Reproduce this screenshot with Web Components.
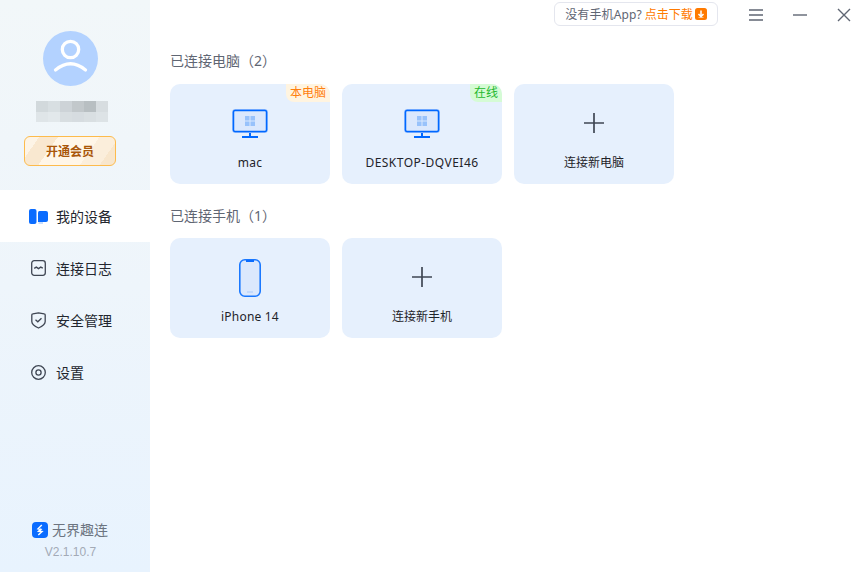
<!DOCTYPE html>
<html lang="zh">
<head>
<meta charset="utf-8">
<title>无界趣连</title>
<style>
  html, body { margin: 0; height: 100%; }
  body {
    width: 860px; height: 572px; overflow: hidden; background: #fff;
    font-family: "Noto Sans", "Noto Sans CJK SC", sans-serif;
  }
  app-shell { height: 572px; }
</style>
</head>
<body>
<app-shell>
  <side-bar slot="side">
    <nav-item active label="我的设备" icon="devices"></nav-item>
    <nav-item label="连接日志" icon="log"></nav-item>
    <nav-item label="安全管理" icon="shield"></nav-item>
    <nav-item label="设置" icon="gear"></nav-item>
  </side-bar>
  <top-bar slot="top"></top-bar>
  <device-section slot="main" heading="已连接电脑（2）" style="--title-gap:11px">
    <device-card kind="pc" name="mac" tag="本电脑" tone="orange"></device-card>
    <device-card kind="pc" name="DESKTOP-DQVEI46" tag="在线" tone="green" style="--track:.47px"></device-card>
    <device-card kind="add" name="连接新电脑" style="--track:0"></device-card>
  </device-section>
  <device-section slot="main" heading="已连接手机（1）">
    <device-card kind="phone" name="iPhone 14"></device-card>
    <device-card kind="add" name="连接新手机" style="--track:0"></device-card>
  </device-section>
</app-shell>

<script>
const ICONS = {
  devices: `<svg width="19" height="15" viewBox="0 0 19 15"><rect width="7.500" height="15" rx="2" fill="#0a6cff"/><path d="M9 3.500Q9 2 10.500 2H17Q19 2 19 4V11Q19 13 17 13H9Z" fill="#0a6cff"/><path d="M9.500 14H14" stroke="#8fbcff"/></svg>`,
  log: `<svg width="15" height="16" viewBox="0 0 15 16" fill="none" stroke="#3f4653" stroke-width="1.300"><rect x=".7" y=".7" width="13.600" height="14.600" rx="2.500"/><path d="M3.200 8.400 5.300 7.100 7.500 8.600 9.700 7.100 11.800 8.200"/></svg>`,
  shield: `<svg width="15" height="17" viewBox="0 0 15 17" fill="none" stroke="#3f4653" stroke-width="1.300"><path d="M.8 3Q.8 2 1.800 1.900L7.500 .8 13.200 1.900Q14.200 2 14.200 3V9.500Q14.200 13 7.500 16 .8 13 .8 9.500Z" stroke-linejoin="round"/><path d="M4.500 7.800 6.800 9.800 10.500 6.200"/></svg>`,
  gear: `<svg width="15" height="15" viewBox="0 0 15 15" fill="none" stroke="#3f4653" stroke-width="1.300"><circle cx="7.500" cy="7.500" r="6.800"/><circle cx="7.500" cy="7.500" r="2.600"/></svg>`,
  pc: `<svg width="36" height="30" viewBox="0 0 36 30"><rect x=".5" y=".5" width="35" height="23" rx="2.500" fill="#dbe8fd" stroke="#93bdff"/><rect x="1.500" y="1.500" width="33" height="21" rx="1.500" fill="none" stroke="#0068ff" stroke-width="1.500"/><g fill="#98c2fb"><rect x="13" y="7" width="4.500" height="4.500"/><rect x="18.500" y="7" width="4.500" height="4.500"/><rect x="13" y="12.500" width="4.500" height="4.500"/><rect x="18.500" y="12.500" width="4.500" height="4.500"/></g><rect x="17" y="24" width="2" height="3" fill="#0068ff"/><rect x="10" y="27" width="16" height="2" fill="#0068ff"/></svg>`,
  phone: `<svg width="24" height="38" viewBox="0 0 24 38"><rect x="1.800" y=".8" width="20.400" height="36.400" rx="5" fill="#dbe8fd" stroke="#1a78ff" stroke-width="1.600"/><rect x="8" y="1" width="8" height="2" fill="#0a6cff"/><rect x="9" y="32.500" width="6" height="1" fill="#a9c9fb"/></svg>`,
  add: `<svg width="22" height="22" viewBox="0 0 22 22"><path d="M11 0V20M1 10H21" stroke="#3f4653" stroke-width="1.700"/></svg>`
};

class AppShell extends HTMLElement {
  constructor() {
    super();
    this.attachShadow({ mode: 'open' }).innerHTML = `
      <style>
        :host { display: flex; }
        .right { flex: 1; display: flex; flex-direction: column; min-width: 0; }
        .main { padding: 0 20px; display: flex; flex-direction: column; gap: 20px; }
      </style>
      <slot name="side"></slot>
      <div class="right">
        <slot name="top"></slot>
        <div class="main"><slot name="main"></slot></div>
      </div>`;
  }
}

class SideBar extends HTMLElement {
  constructor() {
    super();
    const blur = ['#d2d9dc','#d8dfe2','#cdd3d7','#c2c8cb','#b8bfc2','#d7dde0',
                  '#dfe5e8','#e2e8eb','#d8dee1','#d6dce0','#d9dfe2','#dde3e6'];
    this.attachShadow({ mode: 'open' }).innerHTML = `
      <style>
        :host {
          display: flex; flex-direction: column; width: 150px; height: 572px; flex: none;
          background: linear-gradient(180deg, #f2f7f9 0%, #eef5fb 50%, #e8f3fe 100%);
        }
        .top { display: flex; flex-direction: column; align-items: center; padding: 31px 9px 24px 0; }
        .avatar { width: 55px; height: 55px; }
        .blur { display: grid; grid-template-columns: repeat(6, 12px); grid-auto-rows: 10.5px; margin: 15px 0 14px 3px; }
        .vip {
          width: 92px; height: 30px; box-sizing: border-box; border: 1.500px solid #fdbb4c; border-radius: 6px;
          margin-right: 1px;
          display: flex; align-items: center; justify-content: center;
          font-size: 12px; font-weight: 700; color: #a9570a;
          background: linear-gradient(125deg, #fdf4e6 0 13%, #f9e8d0 13% 30%, #fff6e8 30% 68%, #fbeedb 68% 86%, #f8e6cc 86%);
        }
        nav { display: flex; flex-direction: column; }
        .foot { margin-top: auto; display: flex; flex-direction: column; align-items: center; padding: 0 9px 12px 0; gap: 4px; }
        .brand { display: flex; align-items: center; gap: 4px; font-size: 14px; color: #6c7480; line-height: 20px; margin-right: 1px; }
        .ver { font-size: 12px; color: #a3aab6; line-height: 16px; font-family: "Liberation Sans", sans-serif; }
      </style>
      <div class="top">
        <svg class="avatar" viewBox="0 0 55 55">
          <circle cx="27.500" cy="27.500" r="27.500" fill="#b3d2ff"/>
          <circle cx="27.500" cy="18.500" r="8.200" fill="none" stroke="#fff" stroke-width="3.300"/>
          <path d="M12.500 39Q27.500 26.500 42.500 39" fill="none" stroke="#fff" stroke-width="3.300" stroke-linecap="round"/>
        </svg>
        <div class="blur">${blur.map(c => `<i style="background:${c}"></i>`).join('')}</div>
        <div class="vip">开通会员</div>
      </div>
      <nav><slot></slot></nav>
      <div class="foot">
        <div class="brand">
          <svg width="16" height="16" viewBox="0 0 16 16"><rect width="16" height="16" rx="4" fill="#0a6cff"/><path d="M9.800 3 6 6.800 9 7.500 7.200 9.200M9 6.800 6.500 9.300 10 9.500 6.300 13" fill="none" stroke="#fff" stroke-width="1.400"/></svg>
          <span>无界趣连</span>
        </div>
        <div class="ver">V2.1.10.7</div>
      </div>`;
  }
}

class NavItem extends HTMLElement {
  connectedCallback() {
    if (this.shadowRoot) return;
    this.attachShadow({ mode: 'open' }).innerHTML = `
      <style>
        :host { display: flex; align-items: center; height: 52px; font-size: 14px; color: #22262e; }
        :host([active]) { background: #fff; }
        .ic { display: flex; width: 15px; margin-left: 31px; margin-right: 10px; }
        :host([active]) .ic { width: 19px; margin-left: 29px; margin-right: 8px; }
      </style>
      <span class="ic">${ICONS[this.getAttribute('icon')]}</span>
      <span>${this.getAttribute('label')}</span>`;
  }
}

class TopBar extends HTMLElement {
  constructor() {
    super();
    this.attachShadow({ mode: 'open' }).innerHTML = `
      <style>
        :host { display: flex; align-items: flex-start; height: 49px; justify-content: flex-end; }
        .promo {
          margin-top: 2px; height: 24px; box-sizing: border-box; width: 164px;
          border: 1px solid #e4e6ee; border-radius: 6px;
          display: flex; align-items: center; justify-content: center;
          font-size: 12px; color: #5f6673; white-space: nowrap;
        }
        .promo span { letter-spacing: .1px; }
        .promo b { font-weight: 400; color: #ff7a00; margin-left: 3px; }
        .promo svg { margin-left: 2px; }
        .win { display: flex; margin-top: 7px; margin-right: 8px; margin-left: 30px; gap: 28px; }
        .win svg { display: block; }
      </style>
      <div class="promo"><span>没有手机App?</span><b>点击下载</b>
        <svg width="12" height="12" viewBox="0 0 12 12"><rect width="12" height="12" rx="2.500" fill="#ff7a00"/><path d="M6 2.500V7.500M3.500 6 6 8.700 8.500 6" fill="none" stroke="#fff" stroke-width="1.500"/><path d="M3.500 9.500H8.500" stroke="#fff" stroke-width=".5"/></svg>
      </div>
      <div class="win">
        <svg width="16" height="16" viewBox="0 0 16 16"><path d="M1 3H15M1 8H15M1 13H15" stroke="#5f6673" stroke-width="1.400"/></svg>
        <svg width="16" height="16" viewBox="0 0 16 16"><path d="M1 8H15" stroke="#5f6673" stroke-width="1.400"/></svg>
        <svg width="16" height="16" viewBox="0 0 16 16"><path d="M2 2 14 14M14 2 2 14" stroke="#5f6673" stroke-width="1.400"/></svg>
      </div>`;
  }
}

class DeviceSection extends HTMLElement {
  connectedCallback() {
    if (this.shadowRoot) return;
    this.attachShadow({ mode: 'open' }).innerHTML = `
      <style>
        :host { display: block; }
        h2 { margin: 0 0 var(--title-gap, 10px); font-size: 14px; font-weight: 400; line-height: 24px; color: #5f6673; height: 24px; }
        .row { display: flex; gap: 12px; }
      </style>
      <h2>${this.getAttribute('heading')}</h2>
      <div class="row"><slot></slot></div>`;
  }
}

class DeviceCard extends HTMLElement {
  connectedCallback() {
    if (this.shadowRoot) return;
    const tag = this.getAttribute('tag');
    this.attachShadow({ mode: 'open' }).innerHTML = `
      <style>
        :host {
          display: flex; flex-direction: column; align-items: center; position: relative; overflow: hidden;
          width: 160px; height: 100px; border-radius: 10px; background: #e6f0fd;
          font-size: 12px; color: #1f2329;
        }
        .ic { height: 40px; margin-top: 20px; display: flex; align-items: center; justify-content: center; }
        .name { margin-top: 10px; line-height: 18px; letter-spacing: var(--track, .2px); }
        .tag {
          position: absolute; top: 0; right: 0; height: 18px; line-height: 18px; padding: 0 4px;
          font-size: 12px; border-bottom-left-radius: 8px;
        }
        .orange { background: #fff4e0; color: #ff7f0e; }
        .green { background: #d5fbd5; color: #1fb82e; }
      </style>
      <div class="ic">${ICONS[this.getAttribute('kind')]}</div>
      <div class="name">${this.getAttribute('name')}</div>
      ${tag ? `<div class="tag ${this.getAttribute('tone')}">${tag}</div>` : ''}`;
  }
}

customElements.define('app-shell', AppShell);
customElements.define('side-bar', SideBar);
customElements.define('nav-item', NavItem);
customElements.define('top-bar', TopBar);
customElements.define('device-section', DeviceSection);
customElements.define('device-card', DeviceCard);
</script>
</body>
</html>
